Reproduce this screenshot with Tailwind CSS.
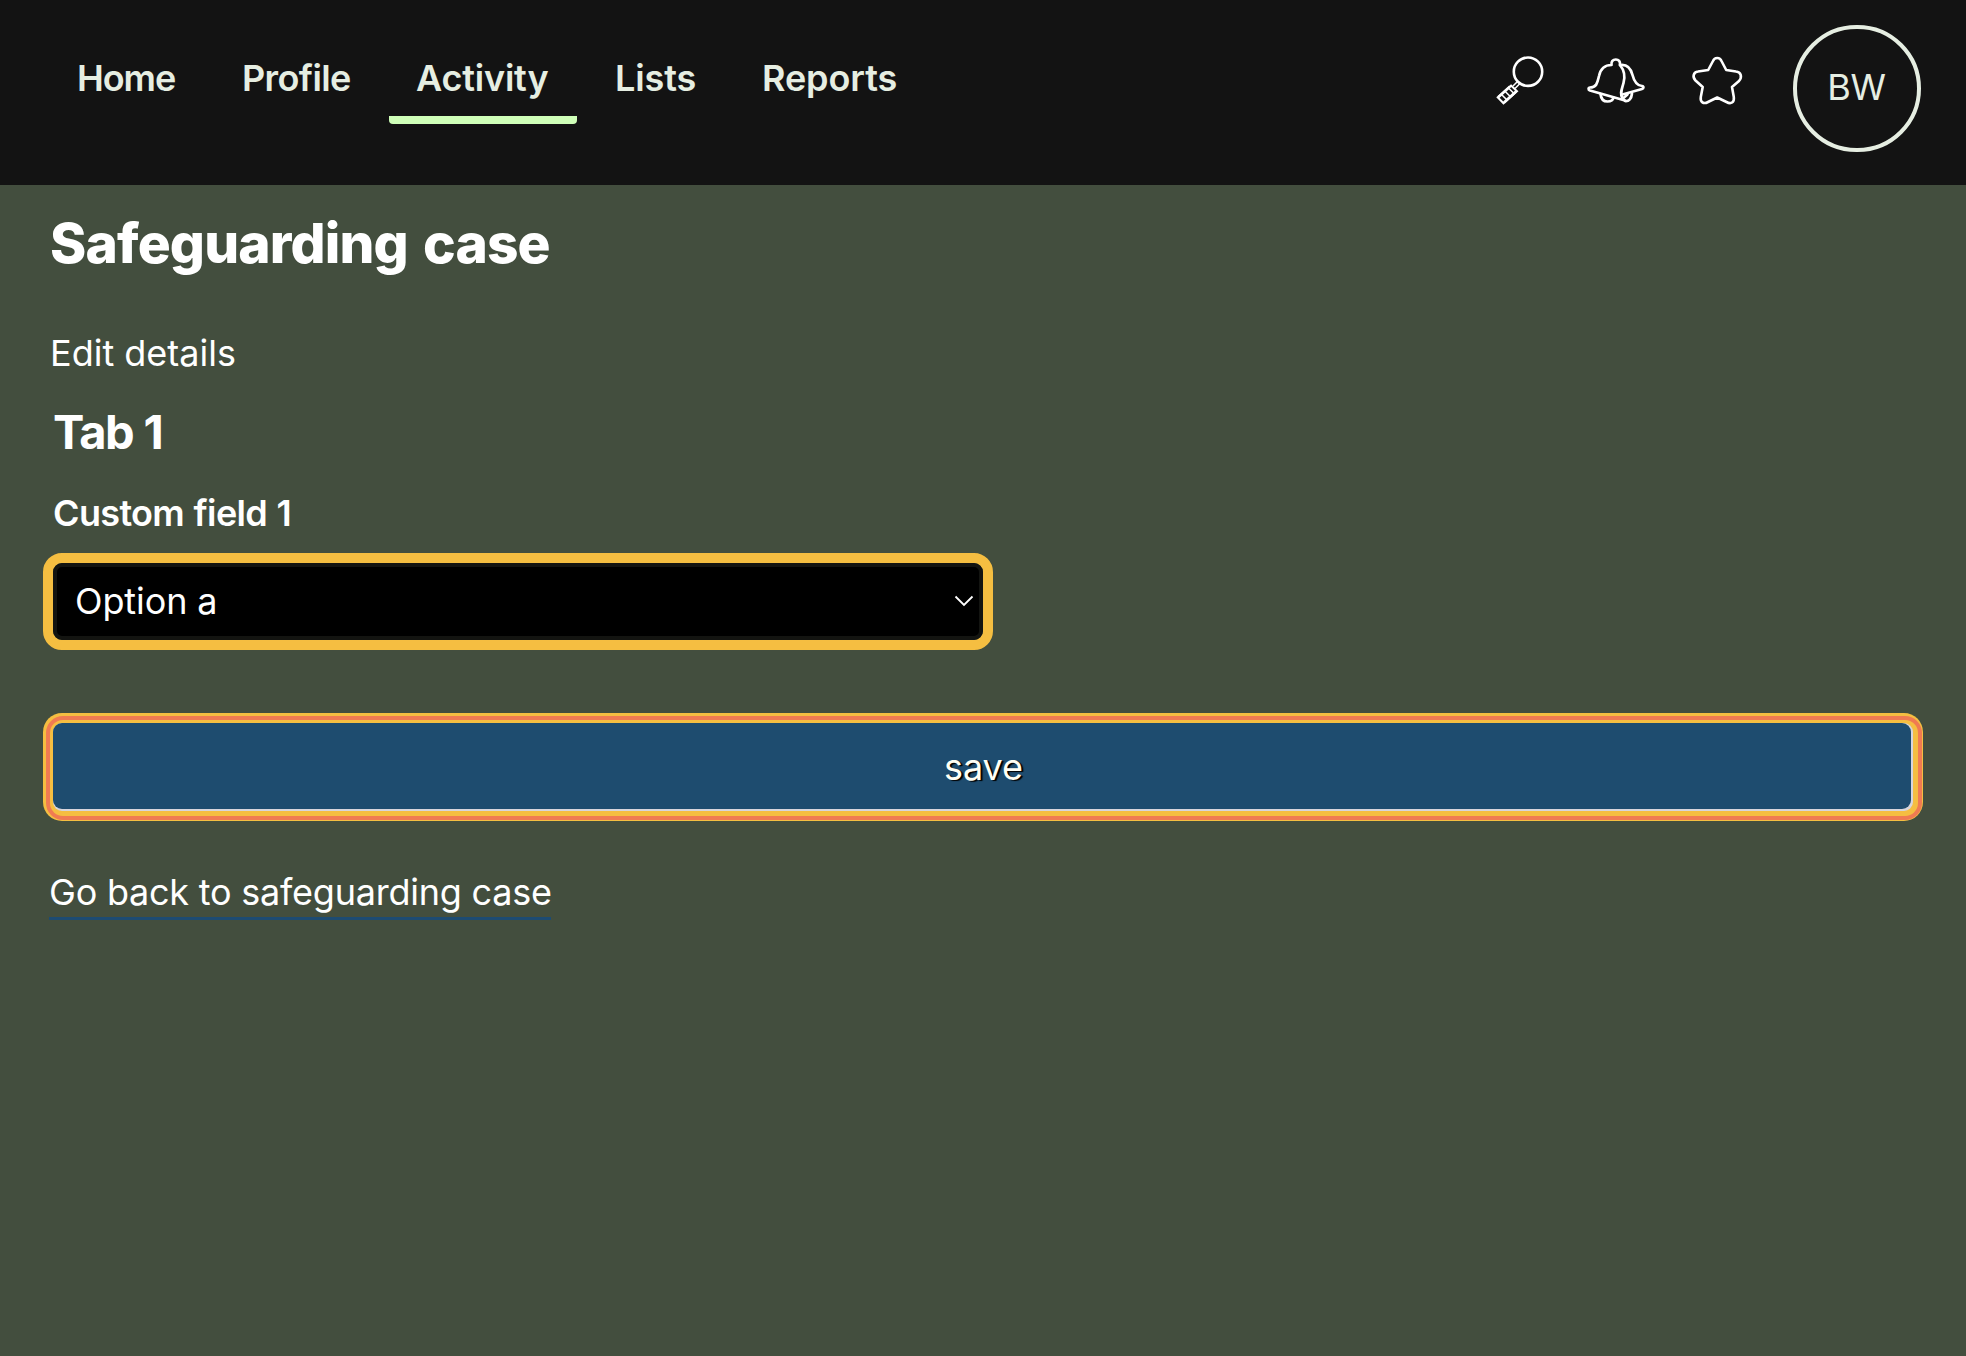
<!DOCTYPE html>
<html lang="en">
<head>
<meta charset="utf-8">
<title>Safeguarding case</title>
<script src="https://cdn.jsdelivr.net/npm/@tailwindcss/browser@4"></script>
</head>
<body class="min-h-screen bg-[#434e3e] font-['Inter',sans-serif] text-[36px] leading-[44px] text-white">
<header class="flex h-[185px] items-start justify-between bg-[#131313] pl-[49px] pr-[45px] text-[#e6eee2]">
  <nav class="flex pt-[41px] font-[640]">
    <a class="h-[83px] w-[164px] pt-[15px] pl-[28px] tracking-[-1.1px]">Home</a>
    <a class="h-[83px] w-[176px] pt-[15px] pl-[29px] tracking-[-0.6px]">Profile</a>
    <a class="h-[83px] w-[188px] rounded-b-[4px] border-b-8 border-[#cfffb8] pt-[15px] pl-[27px] tracking-[-0.2px]">Activity</a>
    <a class="h-[83px] w-[160px] pt-[15px] pl-[38px] tracking-[-0.1px]">Lists</a>
    <a class="h-[83px] pt-[15px] pl-[25px] tracking-[-0.1px]">Reports</a>
  </nav>
  <div class="flex items-start pt-[25px]">
    <svg class="mt-[29px] mr-[40px] h-[52px] w-[52px]" viewBox="0 0 52 52" fill="none" stroke="#fff" stroke-width="2.6">
      <circle cx="34" cy="17.700" r="14.2"/>
      <path d="M24 27l-5 5M26 29.500l-5 5" stroke-width="1.500"/>
      <path d="M17 31.500l6 5.800-13.500 12-5.800-6z" stroke-width="2"/>
      <path d="M15 34.500l4.500 4.500M11.500 37.700l4.500 4.500M8 41l4.500 4.500" stroke-width="1.600"/>
      <path d="M16 32.500l-11.500 10.500M22 37.500l-12 11" stroke-width="2.600"/>
    </svg>
    <svg class="mt-[31px] mr-[42px] h-[50px] w-[62px]" viewBox="0 0 62 50" fill="none" stroke="#fff" stroke-width="2.700" stroke-linejoin="round" stroke-linecap="round">
      <path d="M25.500 9C25 5.500 27 3.500 29.800 3.500S34.500 5.500 34 9C38 14 39.500 20 37.500 27C36 33 33.500 37 36.500 42.500L39 44.500L4 34.500C2 33.800 2.200 31.500 4 31.500C11 31.500 11.500 26 13 20C14.500 13 18 9 25.500 9Z"/>
      <path d="M34 9C41.500 8 45 13 46.500 19C48 25 50 29.500 56 30C58 30.300 57.800 32.500 56 33L36.500 38.500"/>
      <path d="M14.500 38C15 43 18 45.500 21.500 45.500C24.500 45.500 27 44 27.500 41.500M39 45C43 45.500 45.500 42.500 46 37.500M38 41.500L41.500 38.500"/>
    </svg>
    <svg class="mt-[30px] mr-[49px] h-[52px] w-[54px]" viewBox="0 0 54 52" fill="none" stroke="#fff" stroke-width="2.600" stroke-linejoin="round">
      <path d="M23 6C24.500 2 30 2 31.500 6L36.200 15L46 16.500C51 17 52.500 22 49 26L42 32L43.800 42C44.500 47.500 41 49.500 36.500 47L27.200 42.500L18 47C13.500 49.500 10 47 10.800 42L12.700 32L5.500 25.500C2 22 3.500 17 8 16.500L18.200 15Z"/>
    </svg>
    <div class="flex h-[127px] w-32 items-center justify-center rounded-full border-4 border-[#e6eee2] pr-px pb-1 tracking-[-0.2px]">BW</div>
  </div>
</header>
<main class="flex flex-col items-start pr-[43px] pl-[49px]">
  <h1 class="mt-[25px] pl-px text-[55px] leading-[66px] font-extrabold tracking-[-0.85px] [word-spacing:4px]">Safeguarding case</h1>
  <p class="mt-[55px] pl-px">Edit details</p>
  <h2 class="mt-[29px] pl-1 text-[47px] leading-[56px] font-bold tracking-[-1.6px] [word-spacing:1px]">Tab 1</h2>
  <label class="mt-[31px] pl-1 font-[640] tracking-[-0.65px] [word-spacing:1px]">Custom field 1</label>
  <div class="-ml-1.5 mt-[18px] h-[97px] w-[950px] rounded-[19px] border-[10px] border-[#f5be41]">
    <div class="flex h-full items-center justify-between rounded-[9px] border-4 border-[#131411] bg-black pr-[5px] pb-0.5 pl-[18px]">
      <span class="tracking-[-0.1px]">Option a</span>
      <svg class="h-[14px] w-[20px]" viewBox="0 0 20 14" fill="none" stroke="#fff" stroke-width="1.800"><path d="M1.500 2.500L10 11L18.500 2.500"/></svg>
    </div>
  </div>
  <div class="-ml-1.5 mt-[63px] h-[108px] w-[1880px] rounded-[19px] bg-[#f5be41] pt-[3px] pr-px pb-px pl-[3px]">
    <div class="h-full rounded-[17px] bg-[#f07b52] p-1">
      <div class="h-full rounded-[13px] bg-[#f5be41] pt-[3px] pr-[5px] pb-[5px] pl-[3px]">
        <div class="h-full rounded-[9px] bg-[#d8d5dc] pr-0.5 pb-0.5">
          <button class="flex h-full w-full items-center justify-center rounded-[9px] bg-[#1e4c6f] pt-0.5 pl-[3px] text-[#fffff5] [text-shadow:2px_1px_1px_#000]">save</button>
        </div>
      </div>
    </div>
  </div>
  <a class="mt-[49px] h-[50px] w-[502px] border-b-3 border-[#1d4b72] tracking-[-0.23px] whitespace-nowrap">Go back to safeguarding case</a>
</main>
</body>
</html>
